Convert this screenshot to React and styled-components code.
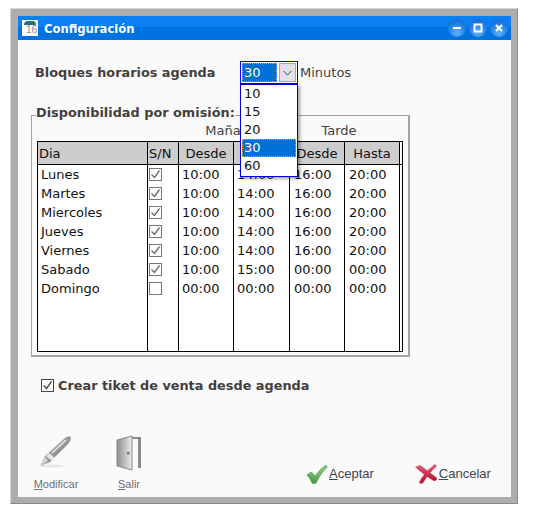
import React from 'react'
import styled, { createGlobalStyle } from 'styled-components'

const GlobalStyle = createGlobalStyle`
  html, body {
    margin: 0;
    padding: 0;
    background: #fff;
    font-family: "DejaVu Sans", Verdana, sans-serif;
  }
`

const Frame = styled.div`
  box-sizing: border-box;
  width: 508px;
  height: 496px;
  margin: 8px 0 0 10px;
  padding: 7px 6px 6px 7px;
  background: #adadad;
  border-top: 1px solid #d8d8d8;
  border-left: 1px solid #d8d8d8;
  border-right: 1px solid #8a8a8a;
  border-bottom: 1px solid #8a8a8a;
  display: flex;
  flex-direction: column;
`

const TitleBar = styled.div`
  height: 24px;
  flex: none;
  background: linear-gradient(#0a80f2 0 44%, #0072e0 44% 100%);
  display: flex;
  align-items: center;
  padding: 0 3px 0 4px;
  color: #fff;
`

const AppIcon = styled.div`
  width: 16px;
  height: 16px;
  background: #fff;
  margin-right: 6px;
  overflow: hidden;
  &::before {
    content: '';
    display: block;
    width: 12px;
    height: 4px;
    margin: 1px auto 0;
    border-radius: 5px 5px 0 0;
    background: #1d6f80;
  }
`

const AppIconDay = styled.span`
  display: block;
  text-align: right;
  padding-right: 1px;
  font: 10px/10px "Liberation Sans", sans-serif;
  color: #8d8d8d;
`

const TitleText = styled.span`
  font-size: 11.6px;
  font-weight: bold;
  flex: 1;
  padding-top: 1px;
`

const WinButton = styled.button`
  width: 18px;
  height: 18px;
  margin-left: 3px;
  padding: 0;
  border: 0;
  border-radius: 50%;
  background: radial-gradient(circle at 50% 75%, #5fb4f8 0, #1e7fe6 55%, #0b5fcc 100%);
  display: flex;
  align-items: center;
  justify-content: center;
`

const Body = styled.div`
  flex: 1;
  background: #fafafa;
  display: flex;
  flex-direction: column;
  padding: 21px 0 0 13px;
  min-height: 0;
`

const BlockRow = styled.div`
  display: flex;
  align-items: center;
  height: 23px;
  padding-left: 4px;
`

const BoldLabel = styled.span`
  width: 205px;
  font-size: 12.85px;
  font-weight: bold;
  color: #433f3f;
`

const ComboWrap = styled.div`
  position: relative;
  width: 58px;
  height: 23px;
  margin-right: 2px;
`

const Combo = styled.div`
  box-sizing: border-box;
  height: 23px;
  border: 1px solid #0000f0;
  display: flex;
  padding: 1px;
  background: #fff;
`

const ComboValue = styled.div`
  flex: 1;
  margin-right: 2px;
  padding-left: 2px;
  background: #0070d8;
  outline: 1px dotted #e8a040;
  outline-offset: -1px;
  color: #fff;
  font-size: 13px;
  line-height: 19px;
`

const ComboArrow = styled.div`
  width: 17px;
  box-sizing: border-box;
  border: 1px solid #a8a8a8;
  background: #e2e2e2;
  display: flex;
  align-items: center;
  justify-content: center;
`

const Menu = styled.ul`
  position: absolute;
  top: 23px;
  left: 0;
  z-index: 5;
  box-sizing: border-box;
  width: 58px;
  height: 93px;
  margin: 0;
  padding: 0 1px;
  list-style: none;
  background: #fff;
  border: 1px solid #0000d8;
  box-shadow: 2px 2px 3px rgba(0, 0, 0, 0.35);
`

const MenuItem = styled.li`
  height: 18px;
  line-height: 18px;
  padding-left: 2px;
  font-size: 13px;
  color: ${(p) => (p.$active ? '#fff' : '#111')};
  background: ${(p) => (p.$active ? '#0070d8' : 'transparent')};
  outline: ${(p) => (p.$active ? '1px dotted #e8a040' : 'none')};
  outline-offset: -1px;
`

const PlainLabel = styled.span`
  font-size: 13px;
  color: #433f3f;
`

const Group = styled.fieldset`
  box-sizing: border-box;
  width: 379px;
  height: 252px;
  margin: 21px 0 0;
  padding: 0 5px;
  border: 1px solid #a3a3a3;
  border-width: 1px 2px 2px 1px;
`

const Legend = styled.legend`
  padding: 0 0 4px;
  margin-left: -1px;
  font-size: 12.85px;
  font-weight: bold;
  color: #433f3f;
  line-height: 16px;
  margin-top: -1px;
`

const Shifts = styled.div`
  display: grid;
  grid-template-columns: 139px 110px 106px;
  height: 19px;
  font-size: 13px;
  line-height: 18px;
  color: #433f3f;
  text-align: center;
  margin-top: -3px;
`

const Table = styled.table`
  box-sizing: border-box;
  width: 366px;
  height: 209px;
  border-collapse: collapse;
  table-layout: fixed;
  border: 1px solid #000;
  font-size: 13px;
  color: #111;
`

const HeadCell = styled.th`
  height: 22px;
  padding: 0 0 0 ${(p) => (p.$left ? '1px' : '0')};
  background: ${(p) => (p.$stub ? 'transparent' : '#cdcdcd')};
  border: 1px solid #000;
  border-top: 0;
  font-weight: normal;
  text-align: ${(p) => (p.$left ? 'left' : 'center')};
  font-size: 13px;
`

const Cell = styled.td`
  height: ${(p) => (p.$fill ? '53px' : '19px')};
  padding: 0 0 0 ${(p) => p.$pad || 0}px;
  border-left: 1px solid #000;
  border-right: 1px solid #000;
  font-size: 13px;
  white-space: nowrap;
  background: #fff;
  line-height: 19px;
`

const Box = styled.span`
  box-sizing: border-box;
  display: flex;
  align-items: center;
  justify-content: center;
  width: ${(p) => p.$size}px;
  height: ${(p) => p.$size}px;
  margin-left: ${(p) => p.$inset || 0}px;
  border: 1px solid ${(p) => p.$line};
  background: #fff;
`

const TicketRow = styled.label`
  display: flex;
  align-items: center;
  gap: 4px;
  margin: 19px 0 0 10px;
  height: 18px;
  font-size: 12.85px;
  font-weight: bold;
  color: #433f3f;
`

const Footer = styled.div`
  margin-top: auto;
  display: flex;
  align-items: flex-end;
  height: 68px;
  padding: 0 0 6px 3px;
`

const ToolButton = styled.div`
  width: ${(p) => p.$w}px;
  display: flex;
  flex-direction: column;
  align-items: center;
  font: 11px/13px "Liberation Sans", sans-serif;
  color: #6e6e78;
  gap: 7px;
  margin-right: ${(p) => p.$gap}px;
`

const ActionButton = styled.div`
  display: flex;
  align-items: center;
  margin-right: ${(p) => p.$gap}px;
  margin-bottom: 7px;
  gap: ${(p) => p.$space}px;
  font: 13px/16px "Liberation Sans", sans-serif;
  color: #3f4450;
`

const Mnemonic = styled.span`
  text-decoration: underline;
`

const days = [
  ['Lunes', true, '10:00', '14:00', '16:00', '20:00'],
  ['Martes', true, '10:00', '14:00', '16:00', '20:00'],
  ['Miercoles', true, '10:00', '14:00', '16:00', '20:00'],
  ['Jueves', true, '10:00', '14:00', '16:00', '20:00'],
  ['Viernes', true, '10:00', '14:00', '16:00', '20:00'],
  ['Sabado', true, '10:00', '15:00', '00:00', '00:00'],
  ['Domingo', false, '00:00', '00:00', '00:00', '00:00'],
]

const Tick = ({ size = 11, color = '#666' }) => (
  <svg width={size} height={size} viewBox="0 0 11 11">
    <path d="M1.5 5.5 L4.5 8.5 L9.5 1.5" fill="none" stroke={color} strokeWidth="1.3" />
  </svg>
)

const Pen = () => (
  <svg width="36" height="36" viewBox="0 0 36 36">
    <defs>
      <linearGradient id="penBody" x1="0" y1="0" x2="1" y2="1">
        <stop offset="0" stopColor="#c8c8c8" />
        <stop offset="1" stopColor="#6a6a6a" />
      </linearGradient>
    </defs>
    <ellipse cx="14" cy="31" rx="12" ry="1.5" fill="#e6e6e6" />
    <path d="M2 31 L7 21 L27 3 Q31 0 33 2 Q33 6 30 9 L12 27 Z" fill="url(#penBody)" />
    <path d="M8 21 L14 26 L17 23 L11 18 Z" fill="#e4e4e4" />
    <path d="M2 31 L7 22 L10 26 Z" fill="#d8d8d8" />
    <path d="M14 18 L28 5" stroke="#e8e8e8" strokeWidth="1.5" />
  </svg>
)

const Door = () => (
  <svg width="26" height="36" viewBox="0 0 26 36">
    <defs>
      <linearGradient id="doorLeaf" x1="0" y1="0" x2="1" y2="0">
        <stop offset="0" stopColor="#8e8e8e" />
        <stop offset="1" stopColor="#ececec" />
      </linearGradient>
    </defs>
    <path d="M13 2 H25 V33 H22 V4 H13 Z" fill="#8a8a8a" />
    <path d="M1 5 L16 1 V35 L1 31 Z" fill="url(#doorLeaf)" stroke="#8a8a8a" />
    <rect x="11" y="17" width="2.5" height="2.5" fill="#777" />
  </svg>
)

const CheckMark = () => (
  <svg width="22" height="20" viewBox="0 0 22 20">
    <defs>
      <linearGradient id="checkFill" x1="0" y1="0" x2="0" y2="1">
        <stop offset="0" stopColor="#9ad08a" />
        <stop offset="1" stopColor="#3f9a48" />
      </linearGradient>
    </defs>
    <path d="M1 11 L5 8 Q7 9 9 12 Q13 6 20 1 L21 3 Q14 10 10 19 Q8 20 6 19 Q4 14 1 11 Z" fill="url(#checkFill)" stroke="#4a9a4a" strokeWidth="0.7" />
  </svg>
)

const CrossMark = () => (
  <svg width="22" height="20" viewBox="0 0 22 20">
    <defs>
      <linearGradient id="crossFill" x1="0" y1="0" x2="0" y2="1">
        <stop offset="0" stopColor="#e0607a" />
        <stop offset="1" stopColor="#b80f30" />
      </linearGradient>
    </defs>
    <path d="M0 3 L5 1 Q12 6 22 14 Q22 17 19 17 Q10 12 0 3 Z" fill="url(#crossFill)" />
    <path d="M20 0 L22 2 Q14 9 8 19 Q6 20 4 19 Q8 9 20 0 Z" fill="url(#crossFill)" />
  </svg>
)

const ComboChevron = () => (
  <svg width="9" height="6" viewBox="0 0 9 6">
    <path d="M0.5 1 L4.5 5 L8.5 1" fill="none" stroke="#444" />
  </svg>
)

const Glyph = ({ d }) => (
  <svg width="10" height="10" viewBox="0 0 10 10">
    <path d={d} fill="none" stroke="#fff" strokeWidth="2" />
  </svg>
)

export default function App() {
  return (
    <>
      <GlobalStyle />
      <Frame>
        <TitleBar>
          <AppIcon>
            <AppIconDay>16</AppIconDay>
          </AppIcon>
          <TitleText>Configuración</TitleText>
          <WinButton><Glyph d="M1 5 H9" /></WinButton>
          <WinButton><Glyph d="M1.5 1.5 H8.5 V8.5 H1.5 Z" /></WinButton>
          <WinButton><Glyph d="M2 2 L8 8 M8 2 L2 8" /></WinButton>
        </TitleBar>
        <Body>
          <BlockRow>
            <BoldLabel>Bloques horarios agenda</BoldLabel>
            <ComboWrap>
              <Combo>
                <ComboValue>30</ComboValue>
                <ComboArrow><ComboChevron /></ComboArrow>
              </Combo>
              <Menu>
                {['10', '15', '20', '30', '60'].map((v) => (
                  <MenuItem key={v} $active={v === '30'}>{v}</MenuItem>
                ))}
              </Menu>
            </ComboWrap>
            <PlainLabel>Minutos</PlainLabel>
          </BlockRow>
          <Group>
            <Legend>Disponibilidad por omisión:</Legend>
            <Shifts>
              <span />
              <span>Mañana</span>
              <span>Tarde</span>
            </Shifts>
            <Table>
              <colgroup>
                <col style={{ width: 110 }} />
                <col style={{ width: 31 }} />
                <col style={{ width: 55 }} />
                <col style={{ width: 56 }} />
                <col style={{ width: 55 }} />
                <col style={{ width: 55 }} />
                <col />
              </colgroup>
              <thead>
                <tr>
                  <HeadCell $left>Dia</HeadCell>
                  <HeadCell $left>S/N</HeadCell>
                  <HeadCell>Desde</HeadCell>
                  <HeadCell>Hasta</HeadCell>
                  <HeadCell>Desde</HeadCell>
                  <HeadCell>Hasta</HeadCell>
                  <HeadCell $stub />
                </tr>
              </thead>
              <tbody>
                {days.map(([name, on, a, b, c, d]) => (
                  <tr key={name}>
                    <Cell $pad={3}>{name}</Cell>
                    <Cell><Box $size={13} $inset={1} $line="#777">{on && <Tick />}</Box></Cell>
                    <Cell $pad={3}>{a}</Cell>
                    <Cell $pad={3}>{b}</Cell>
                    <Cell $pad={4}>{c}</Cell>
                    <Cell $pad={4}>{d}</Cell>
                    <Cell />
                  </tr>
                ))}
                <tr>
                  <Cell $fill />
                  <Cell $fill />
                  <Cell $fill />
                  <Cell $fill />
                  <Cell $fill />
                  <Cell $fill />
                  <Cell $fill />
                </tr>
              </tbody>
            </Table>
          </Group>
          <TicketRow>
            <Box $size={13} $line="#444"><Tick color="#444" /></Box>
            Crear tiket de venta desde agenda
          </TicketRow>
          <Footer>
            <ToolButton $w={44} $gap={36}>
              <Pen />
              <span><Mnemonic>M</Mnemonic>odificar</span>
            </ToolButton>
            <ToolButton $w={30} $gap={162}>
              <Door />
              <span><Mnemonic>S</Mnemonic>alir</span>
            </ToolButton>
            <ActionButton $gap={41} $space={1}>
              <CheckMark />
              <span><Mnemonic>A</Mnemonic>ceptar</span>
            </ActionButton>
            <ActionButton $gap={0} $space={2}>
              <CrossMark />
              <span><Mnemonic>C</Mnemonic>ancelar</span>
            </ActionButton>
          </Footer>
        </Body>
      </Frame>
    </>
  )
}
